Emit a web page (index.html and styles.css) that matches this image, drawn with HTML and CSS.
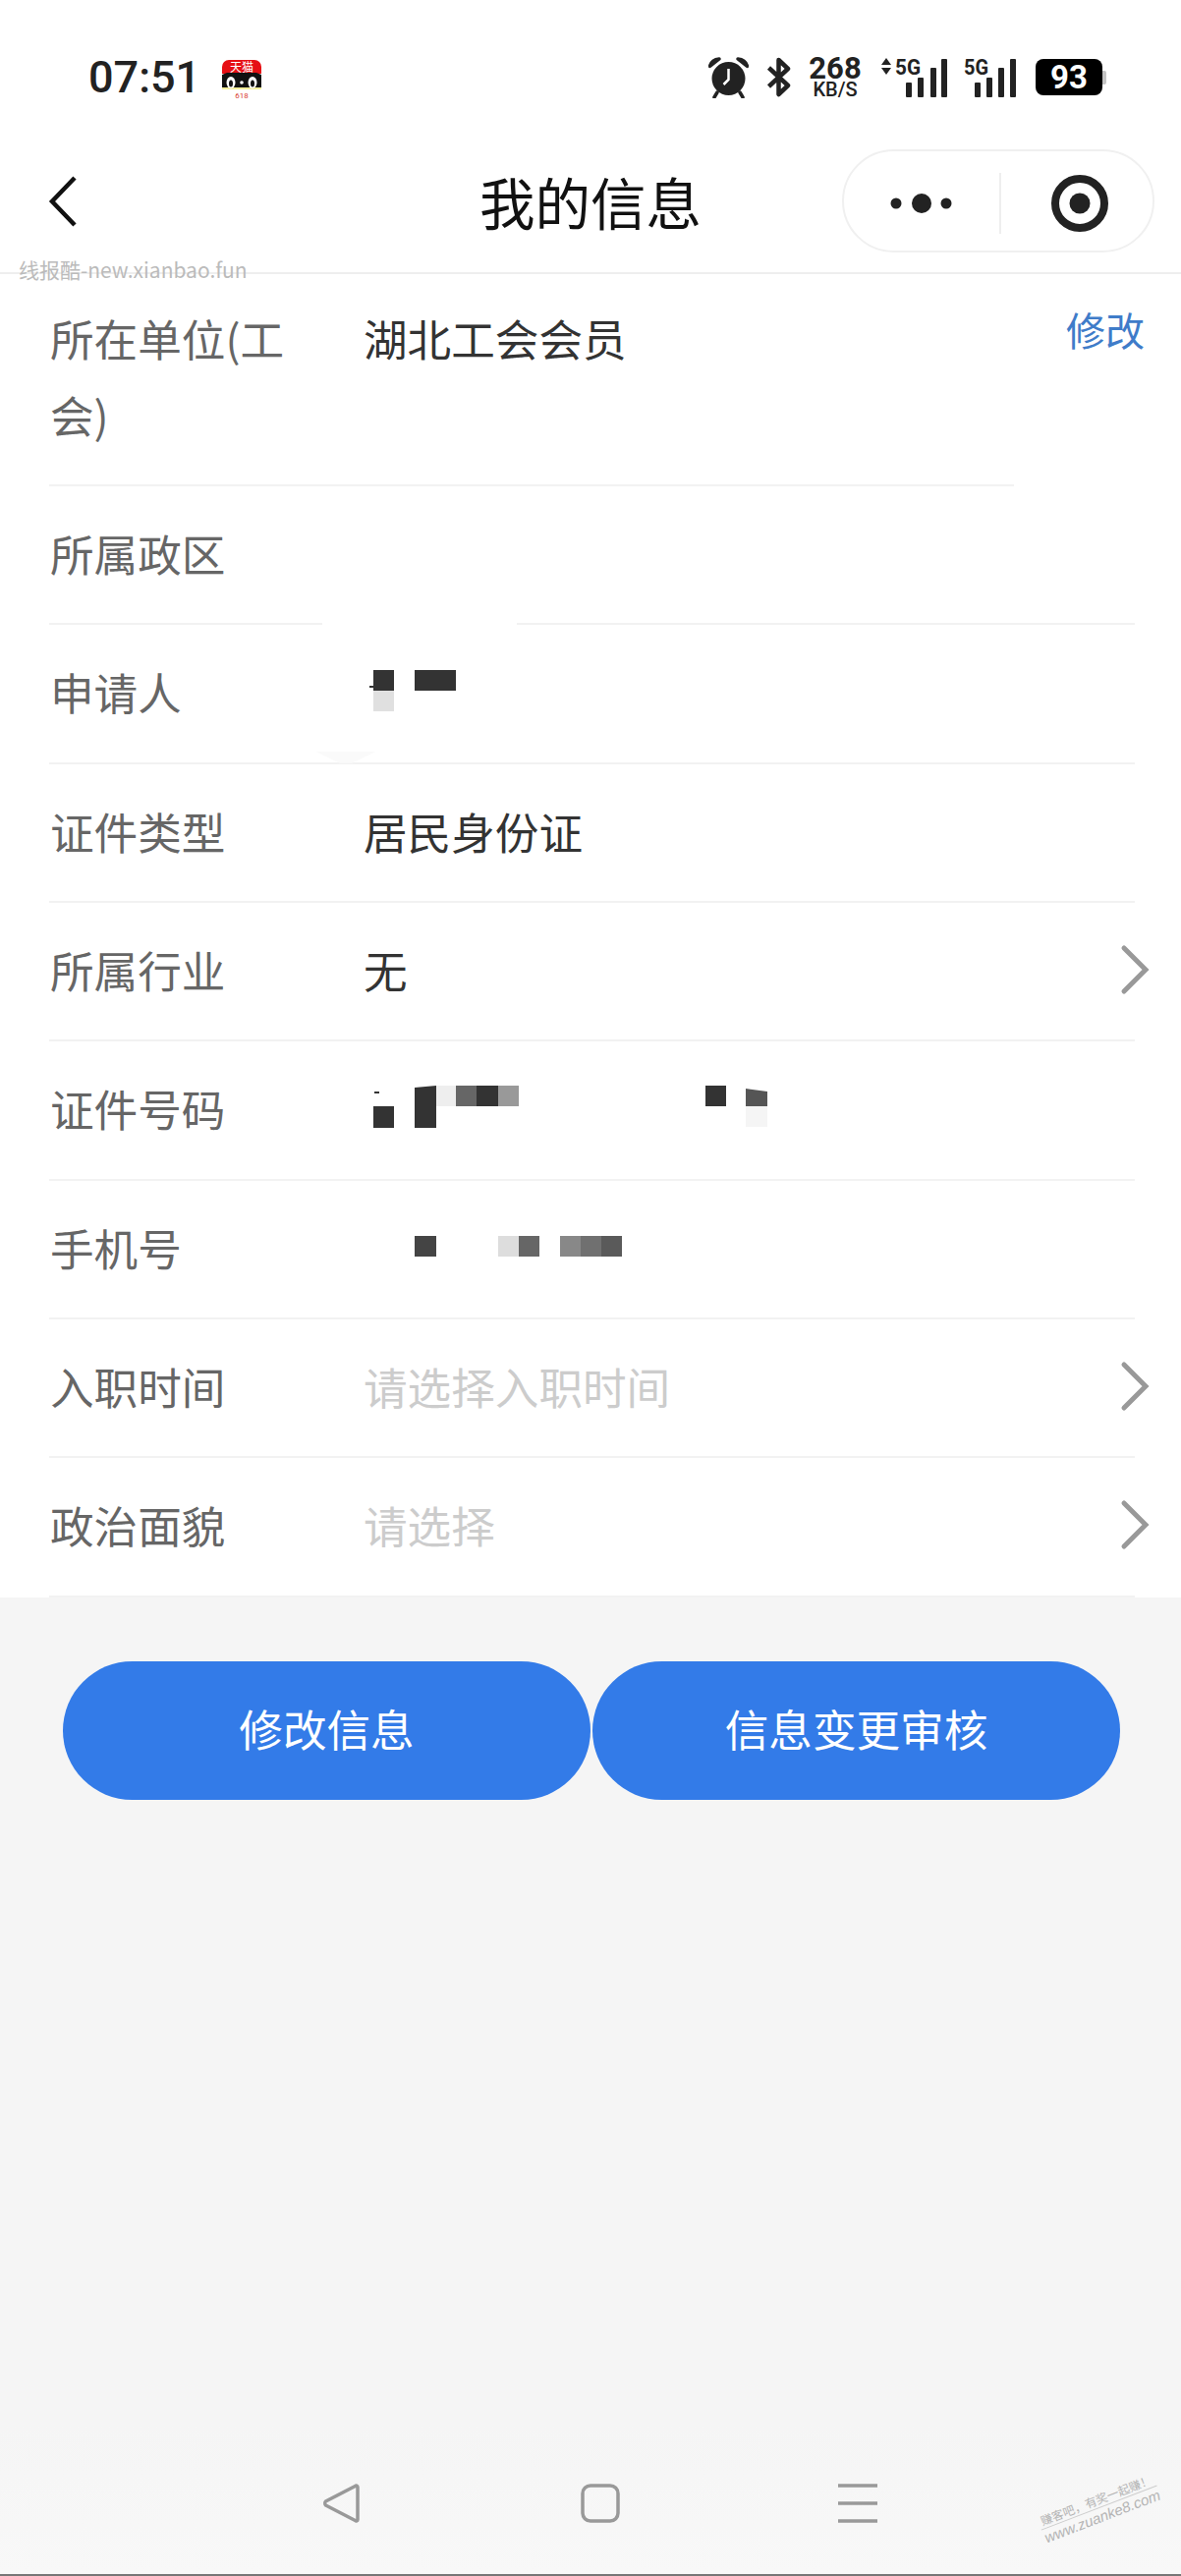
FILE: index.html
```html
<!DOCTYPE html>
<html lang="zh-CN">
<head>
    <meta charset="UTF-8">
    <title>我的信息</title>
    <link rel="stylesheet" href="styles.css">
</head>
<body>
    <div class="page">
        <header class="top">
            <div class="status">
                <span class="time">07:51</span>
                <svg class="app-icon" width="40" height="46" viewBox="0 -3 40 46">
                    <path d="M0 14V7a7 7 0 0 1 7-7h26a7 7 0 0 1 7 7v7z" fill="#e60f14"/>
                    <path d="M0 15l5-2h30l5 2v14H0z" fill="#111"/>
                    <rect x="0" y="28" width="40" height="2" fill="#f2ee9c"/>
                    <ellipse cx="9" cy="23" rx="4.500" ry="6" fill="#fff"/>
                    <ellipse cx="31" cy="23" rx="4.500" ry="6" fill="#fff"/>
                    <ellipse cx="9" cy="24" rx="2" ry="3.500" fill="#111"/>
                    <ellipse cx="31" cy="24" rx="2" ry="3.500" fill="#111"/>
                    <circle cx="20" cy="23" r="1.800" fill="#fff"/>
                    <text x="20" y="12" class="app-name" text-anchor="middle">天猫</text>
                    <text x="20" y="39" class="app-sub" text-anchor="middle">618</text>
                </svg>
                <div class="status-right">
                    <svg class="alarm" width="41" height="42" viewBox="0 0 41 42">
                        <circle cx="20.5" cy="22" r="17" fill="#222"/>
                        <path d="M1.5 9.5C2.5 5.5 6 2.5 11 2L1.5 9.5zM39.5 9.5C38.5 5.5 35 2.5 30 2l9.5 7.5z" fill="#222" stroke="#222" stroke-width="3.5" stroke-linejoin="round"/>
                        <path d="M9 36l-3 5M32 36l3 5" stroke="#222" stroke-width="3.5" stroke-linecap="round"/>
                        <path d="M20.5 12v11l-5 5" fill="none" stroke="#fff" stroke-width="2.5"/>
                    </svg>
                    <svg class="bluetooth" width="26" height="41" viewBox="0 0 26 41">
                        <path d="M2.5 11L22 29 12.5 38V3L22 12 2.5 30" fill="none" stroke="#222" stroke-width="4.5" stroke-linejoin="round"/>
                    </svg>
                    <div class="speed">
                        <span class="speed-num">268</span>
                        <span class="speed-unit">KB/S</span>
                    </div>
                    <svg class="signal-a" width="68" height="50" viewBox="0 -4 68 50">
                        <path d="M0 8l5-7 5 7zM0 11l5 7 5-7z" fill="#222"/>
                        <text x="14" y="18" class="net" textLength="26" lengthAdjust="spacingAndGlyphs">5G</text>
                        <rect x="25" y="26" width="6" height="15" rx="1" fill="#222"/>
                        <rect x="37" y="21" width="6" height="20" rx="1" fill="#222"/>
                        <rect x="50" y="11" width="6" height="30" rx="1" fill="#222"/>
                        <rect x="61" y="2" width="6" height="39" rx="1" fill="#222"/>
                    </svg>
                    <svg class="signal-b" width="54" height="50" viewBox="0 -4 54 50">
                        <text x="0" y="18" class="net" textLength="25" lengthAdjust="spacingAndGlyphs">5G</text>
                        <rect x="11" y="26" width="6" height="15" rx="1" fill="#222"/>
                        <rect x="23" y="21" width="6" height="20" rx="1" fill="#222"/>
                        <rect x="35" y="11" width="6" height="30" rx="1" fill="#222"/>
                        <rect x="47" y="2" width="6" height="39" rx="1" fill="#222"/>
                    </svg>
                    <div class="battery">93</div>
                </div>
            </div>
            <div class="titlebar">
                <svg class="back" width="30" height="54" viewBox="0 0 30 54">
                    <path d="M27 3L4 27l23 24" fill="none" stroke="#111" stroke-width="4.5"/>
                </svg>
                <div class="title">我的信息</div>
                <div class="capsule">
                    <svg width="316" height="103" viewBox="0 0 316 103">
                        <circle cx="53" cy="53" r="5.5" fill="#222"/>
                        <circle cx="79" cy="53" r="10" fill="#222"/>
                        <circle cx="104" cy="53" r="5.5" fill="#222"/>
                        <path d="M159 22v62" stroke="#eee" stroke-width="2"/>
                        <circle cx="240" cy="53" r="25" fill="none" stroke="#222" stroke-width="8"/>
                        <circle cx="240" cy="53" r="10.5" fill="#222"/>
                    </svg>
                </div>
            </div>
            <span class="mark">线报酷-new.xianbao.fun</span>
        </header>

        <section class="form">
            <div class="first">
                <div class="row row-first">
                    <div class="label label-wrap">所在单位(工会)</div>
                    <div class="value">湖北工会会员</div>
                </div>
                <a class="edit">修改</a>
            </div>
            <div class="row">
                <div class="label">所属政区</div>
                <i class="line-gap"></i>
            </div>
            <div class="row">
                <div class="label">申请人</div>
                <svg class="mosaic" width="94" height="42" viewBox="0 0 94 42">
                    <rect x="10" y="0" width="21" height="21" fill="#333"/>
                    <rect x="10" y="21" width="21" height="21" fill="#e0e0e0"/>
                    <rect x="6" y="16" width="9" height="2" fill="#333"/>
                    <rect x="52" y="0" width="42" height="21" fill="#333"/>
                </svg>
                <i class="line-wedge"></i>
            </div>
            <div class="row">
                <div class="label">证件类型</div>
                <div class="value">居民身份证</div>
            </div>
            <div class="row">
                <div class="label">所属行业</div>
                <div class="value">无</div>
                <svg class="more" width="30" height="52" viewBox="0 0 30 52"><path d="M4 4l22 22L4 48" fill="none" stroke="#999" stroke-width="5" stroke-linecap="round"/></svg>
            </div>
            <div class="row">
                <div class="label">证件号码</div>
                <svg class="mosaic" width="412" height="43" viewBox="0 0 412 43">
                    <rect x="11" y="6" width="5" height="2" fill="#333"/>
                    <rect x="10" y="21" width="21" height="22" fill="#333"/>
                    <path d="M52 2l22-2v43H52z" fill="#333"/>
                    <rect x="74" y="0" width="20" height="21" fill="#eee"/>
                    <rect x="94" y="0" width="21" height="21" fill="#666"/>
                    <rect x="115" y="0" width="22" height="21" fill="#333"/>
                    <rect x="137" y="0" width="21" height="21" fill="#999"/>
                    <rect x="348" y="0" width="21" height="21" fill="#333"/>
                    <path d="M389 3l22 3v15h-22z" fill="#555"/>
                    <rect x="389" y="21" width="22" height="21" fill="#f5f5f5"/>
                </svg>
            </div>
            <div class="row">
                <div class="label">手机号</div>
                <svg class="mosaic" width="263" height="21" viewBox="0 0 263 21">
                    <rect x="52" y="0" width="22" height="21" fill="#444"/>
                    <rect x="137" y="0" width="21" height="21" fill="#ddd"/>
                    <rect x="158" y="0" width="21" height="21" fill="#666"/>
                    <rect x="200" y="0" width="21" height="21" fill="#888"/>
                    <rect x="221" y="0" width="21" height="21" fill="#707070"/>
                    <rect x="242" y="0" width="21" height="21" fill="#5a5a5a"/>
                </svg>
            </div>
            <div class="row">
                <div class="label">入职时间</div>
                <div class="value placeholder">请选择入职时间</div>
                <svg class="more" width="30" height="52" viewBox="0 0 30 52"><path d="M4 4l22 22L4 48" fill="none" stroke="#999" stroke-width="5" stroke-linecap="round"/></svg>
            </div>
            <div class="row">
                <div class="label">政治面貌</div>
                <div class="value placeholder">请选择</div>
                <svg class="more" width="30" height="52" viewBox="0 0 30 52"><path d="M4 4l22 22L4 48" fill="none" stroke="#999" stroke-width="5" stroke-linecap="round"/></svg>
            </div>
        </section>

        <div class="actions">
            <button class="btn">修改信息</button>
            <button class="btn">信息变更审核</button>
        </div>

        <footer class="sysnav">
            <svg class="nav-back" width="40" height="40" viewBox="0 0 40 40">
                <path d="M36 3.5c0-1.500-1.500-2-2.500-1L3.500 18c-1 1-1 3 0 4l30 15.500c1 1 2.500.5 2.500-1z" fill="none" stroke="#999" stroke-width="3.500" stroke-linejoin="round"/>
            </svg>
            <svg class="nav-home" width="40" height="40" viewBox="0 0 40 40">
                <rect x="2" y="2" width="36" height="36" rx="8" fill="none" stroke="#999" stroke-width="3.500"/>
            </svg>
            <svg class="nav-menu" width="40" height="40" viewBox="0 0 40 40">
                <path d="M0 2h40M0 20h40M0 38h40" stroke="#999" stroke-width="3.500"/>
            </svg>
            <div class="stamp">
                <div class="stamp-top">赚客吧，有奖一起赚！</div>
                <div class="stamp-url">www.zuanke8.com</div>
            </div>
        </footer>
    </div>
</body>
</html>
```

FILE: styles.css
```css
* {
    box-sizing: border-box;
}

body {
    margin: 0;
    font-family: "Noto Sans CJK SC", sans-serif;
    background: #f5f5f5;
}

.page {
    display: flex;
    flex-direction: column;
    height: 2622px;
}

/* 顶部 */
.top {
    position: relative;
    height: 279px;
    background: #fff;
    border-bottom: 2px solid #eee;
}

.status {
    display: flex;
    align-items: center;
    height: 152px;
    padding: 5px 0 0 90px;
}

.time {
    width: 107px;
    font-family: Roboto, sans-serif;
    font-size: 45px;
    font-weight: 500;
    white-space: nowrap;
    color: #222;
}

.app-icon {
    margin: 4px 0 0 29px;
}

.app-name {
    font-size: 12px;
    fill: #fff;
}

.app-sub {
    font-family: Roboto, sans-serif;
    font-size: 8px;
    fill: #d8402f;
}

.status-right {
    display: flex;
    align-items: center;
    margin-left: auto;
    margin-right: 80px;
}

.bluetooth {
    margin-left: 18px;
}

.speed {
    display: flex;
    flex-direction: column;
    align-items: center;
    width: 54px;
    margin-left: 17px;
    font-family: Roboto, sans-serif;
    color: #222;
}

.speed-num {
    font-size: 31px;
    font-weight: 700;
    line-height: 24px;
}

.speed-unit {
    font-size: 20px;
    font-weight: 500;
    line-height: 18px;
}

.signal-a {
    margin-left: 20px;
}

.signal-b {
    margin-left: 16px;
}

.net {
    font-family: Roboto, sans-serif;
    font-size: 22px;
    font-weight: 700;
    fill: #222;
}

.battery {
    position: relative;
    width: 68px;
    height: 37px;
    margin-left: 19px;
    border-radius: 8px;
    background: #000;
    color: #fff;
    font-family: Roboto, sans-serif;
    font-size: 33px;
    font-weight: 700;
    line-height: 37px;
    text-align: center;
}

.battery::after {
    content: "";
    position: absolute;
    top: 12px;
    right: -4px;
    width: 4px;
    height: 14px;
    border-radius: 0 2px 2px 0;
    background: #c4c4c4;
}

.titlebar {
    display: grid;
    grid-template-columns: 1fr auto 1fr;
    align-items: center;
    height: 105px;
}

.back {
    margin-left: 49px;
}

.title {
    font-size: 56.5px;
    line-height: 105px;
    color: #111;
}

.capsule {
    justify-self: end;
    width: 318px;
    height: 105px;
    margin-right: 27px;
    border: 2px solid #f0f0f0;
    border-radius: 53px;
}

.capsule svg {
    display: block;
}

.mark {
    position: absolute;
    top: 259px;
    left: 19px;
    font-size: 21px;
    line-height: 30px;
    color: #bbb;
}

/* 表单 */
.form {
    background: #fff;
}

.first {
    display: flex;
    padding-left: 50px;
}

.row {
    position: relative;
    display: flex;
    align-items: center;
    width: 1105px;
    height: 141.33px;
    margin-left: 50px;
    padding-bottom: 3px;
    border-bottom: 2px solid #f2f2f2;
}

.row-first {
    align-items: flex-start;
    width: 982px;
    height: 216px;
    margin-left: 0;
    padding-top: 26px;
}

.label {
    flex: none;
    width: 320px;
    padding-left: 1px;
    font-size: 44.6px;
    line-height: 78px;
    color: #666;
}

.label-wrap {
    width: 250px;
    margin-right: 70px;
}

.value {
    font-size: 44.6px;
    line-height: 78px;
    color: #333;
}

.placeholder {
    color: #ccc;
}

.edit {
    margin: 27px 0 0 53px;
    font-size: 40px;
    line-height: 58px;
    color: #3f7cc9;
}

.more {
    margin-left: auto;
    margin-right: -15px;
}

.mosaic {
    display: block;
    margin-bottom: 3px;
}

.line-gap {
    position: absolute;
    bottom: -2px;
    left: 278px;
    width: 198px;
    height: 2px;
    background: #fff;
}

.line-wedge {
    position: absolute;
    bottom: -1px;
    left: 271px;
    width: 62px;
    height: 12px;
    background: #fafafa;
    clip-path: polygon(0 0, 100% 0, 60% 100%, 40% 100%);
}

/* 按钮 */
.actions {
    display: flex;
    gap: 2px;
    padding: 65px 0 0 64px;
}

.btn {
    width: 537px;
    height: 141px;
    padding: 0 0 6px;
    border: 0;
    border-radius: 71px;
    background: #337be8;
    color: #fff;
    font-family: inherit;
    font-size: 44.6px;
}

/* 底部导航 */
.sysnav {
    position: relative;
    display: flex;
    align-items: flex-start;
    height: 152px;
    margin-top: auto;
    padding: 58px 0 0 328px;
    background: linear-gradient(#f5f5f5, #f8f8f8);
    border-bottom: 2px solid #777;
}

.nav-home {
    margin-left: 223px;
}

.nav-menu {
    margin-left: 222px;
}

.stamp {
    position: absolute;
    top: 66px;
    left: 1056px;
    width: 126px;
    color: #b4b4b4;
    text-align: center;
    transform: rotate(-21deg);
}

.stamp-top {
    font-size: 12px;
    line-height: 16px;
    border-bottom: 1px solid #ccc;
}

.stamp-url {
    font-family: "Liberation Sans", sans-serif;
    font-size: 15px;
    font-style: italic;
    line-height: 18px;
}
```
